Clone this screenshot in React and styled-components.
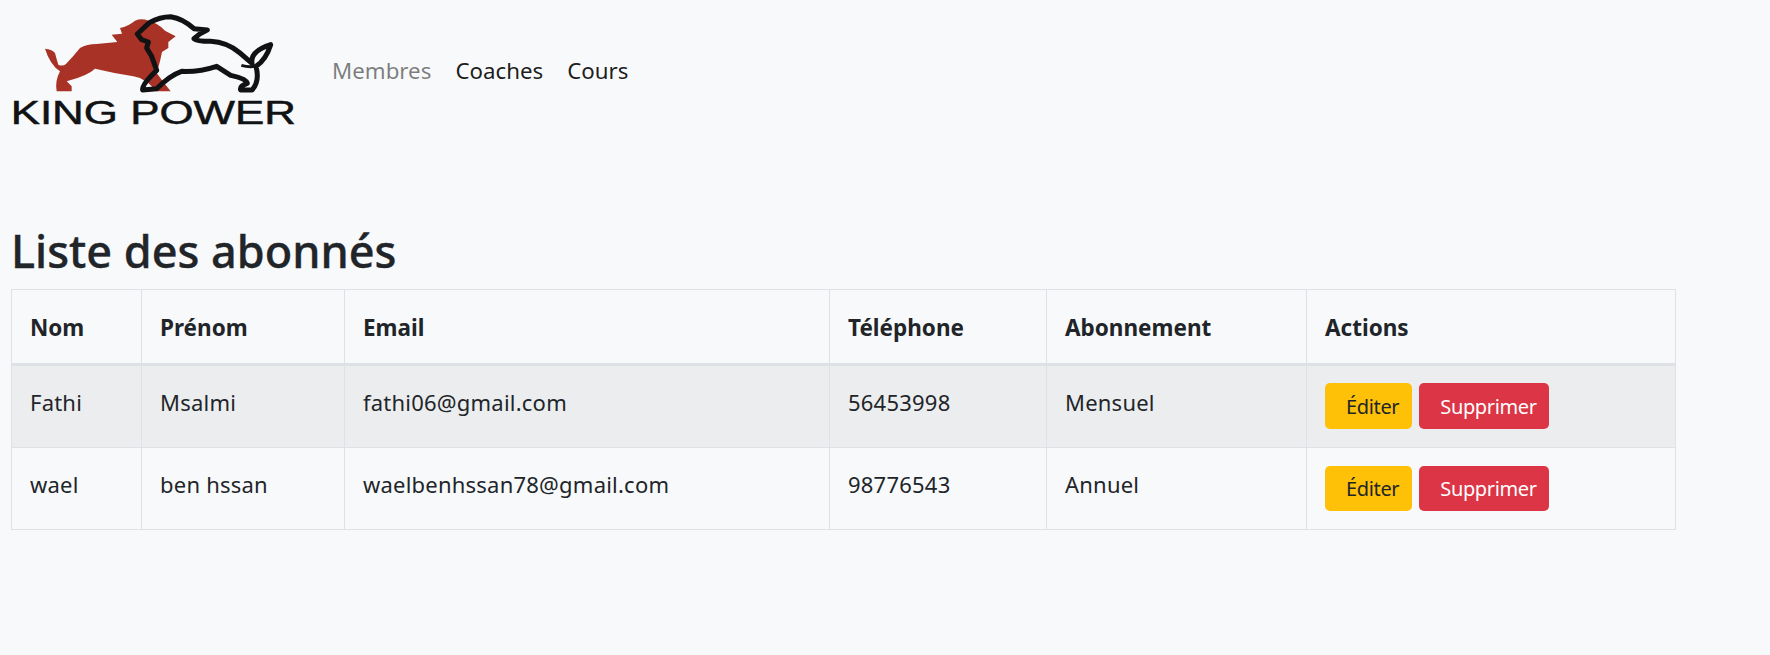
import { createGlobalStyle } from 'styled-components';
import styled from 'styled-components';

const GlobalStyle = createGlobalStyle`
  body {
    margin: 0;
    background: #f8f9fa;
    color: #212529;
    font-family: "Noto Sans", "Open Sans", sans-serif;
    font-size: 22px;
    line-height: 1.5;
  }
`;

const Page = styled.div`
  width: 1770px;
  height: 655px;
  padding: 0 11px;
  box-sizing: border-box;
  overflow: hidden;
`;

const Navbar = styled.nav`
  display: flex;
  align-items: flex-start;
  height: 221px;
`;

const LogoSvg = styled.svg`
  display: block;
  width: 300px;
  height: 140px;
  margin-right: 21px;
  flex: none;
`;

const NavLinks = styled.div`
  display: flex;
  gap: 24px;
  margin-top: 54px;
`;

const NavLink = styled.a`
  color: ${props => (props.$active ? 'rgba(0, 0, 0, 0.5)' : 'rgba(0, 0, 0, 0.9)')};
  font-size: 22.3px;
  text-decoration: none;
`;

const Title = styled.h2`
  margin: 0 0 8px;
  font-size: 45px;
  font-weight: 500;
  line-height: 60px;
  -webkit-text-stroke: 0.4px #212529;
`;

const Table = styled.table`
  width: 1664px;
  table-layout: fixed;
  border-collapse: collapse;
`;

const HeadCell = styled.th`
  width: ${props => props.$width}px;
  box-sizing: border-box;
  height: 75px;
  padding: 2px 18px 0;
  border: 1px solid #dee2e6;
  border-bottom: 3px solid #dee2e6;
  text-align: left;
  font-size: 22.5px;
  font-weight: 700;
`;

const Row = styled.tr`
  background: ${props => (props.$striped ? '#ecedef' : 'transparent')};
`;

const Cell = styled.td`
  box-sizing: border-box;
  height: ${props => props.$height}px;
  padding: 20px 18px 0;
  border: 1px solid #dee2e6;
  vertical-align: top;
  font-size: 22px;
  letter-spacing: 0.22px;
`;

const ActionCell = styled(Cell)`
  padding-top: ${props => props.$top}px;
`;

const Actions = styled.div`
  display: flex;
  gap: 7px;
`;

const Button = styled.button`
  height: ${props => props.$height}px;
  padding: 0 ${props => (props.$danger ? 12 : 13)}px 0 21px;
  border: none;
  border-radius: 5px;
  background: ${props => (props.$danger ? '#dc3545' : '#ffc107')};
  color: ${props => (props.$danger ? '#fff' : '#212529')};
  font-family: inherit;
  font-size: 20px;
  letter-spacing: -0.35px;
`;

const Logo = () => (
  <LogoSvg viewBox="33 0 900 420" aria-label="King Power">
    <g transform="translate(0 4)">
      <path
        fill="#a93226"
        d="M135 142 Q155 143 165 155 Q170 175 175 190 Q188 196 198 188 Q220 165 240 140 Q260 128 290 128 L352 122 L335 100 L366 97 L360 80 Q385 75 405 58 Q425 50 445 58 Q475 65 495 88 L527 105 L505 122 L505 140 L486 152 L480 180 L470 215 L490 242 L512 270 L470 270 L445 245 L420 230 L400 225 Q340 215 285 202 Q265 222 200 240 L215 255 L215 270 L170 270 Q164 240 180 210 Q150 190 135 142 Z"
      />
      <path
        fill="none"
        stroke="#111214"
        strokeWidth="15"
        strokeLinejoin="round"
        d="M412 98 L448 64 Q480 46 512 46 Q550 52 582 82 L622 86 Q600 95 582 112 Q590 120 632 120 Q680 122 720 155 L756 186 Q750 150 812 130 Q798 175 768 195 Q780 240 756 266 L722 266 Q718 254 742 246 Q740 232 692 222 L650 195 Q600 212 545 210 Q510 222 470 262 L428 266 Q425 250 470 207 L455 165 L440 140 L445 122 L425 115 Z"
      />
      <path fill="none" stroke="#111214" strokeWidth="9" d="M724 192 Q745 198 765 195" />
    </g>
    <text
      x="32"
      y="373"
      fill="#111214"
      stroke="#111214"
      strokeWidth="1.5"
      fontFamily="'Liberation Sans', sans-serif"
      fontSize="98"
      textLength="856"
      lengthAdjust="spacingAndGlyphs"
    >
      KING POWER
    </text>
  </LogoSvg>
);

const columns = [
  ['Nom', 130],
  ['Prénom', 203],
  ['Email', 485],
  ['Téléphone', 217],
  ['Abonnement', 260],
  ['Actions', 369],
];

const members = [
  { nom: 'Fathi', prenom: 'Msalmi', email: 'fathi06@gmail.com', tel: '56453998', abo: 'Mensuel', height: 83, btn: 46, top: 17 },
  { nom: 'wael', prenom: 'ben hssan', email: 'waelbenhssan78@gmail.com', tel: '98776543', abo: 'Annuel', height: 82, btn: 45, top: 18 },
];

export default function App() {
  return (
    <Page>
      <GlobalStyle />
      <Navbar>
        <Logo />
        <NavLinks>
          <NavLink $active href="#">Membres</NavLink>
          <NavLink href="#">Coaches</NavLink>
          <NavLink href="#">Cours</NavLink>
        </NavLinks>
      </Navbar>
      <Title>Liste des abonnés</Title>
      <Table>
        <thead>
          <tr>
            {columns.map(([label, width]) => (
              <HeadCell key={label} $width={width}>{label}</HeadCell>
            ))}
          </tr>
        </thead>
        <tbody>
          {members.map((m, i) => (
            <Row key={m.email} $striped={i === 0}>
              <Cell $height={m.height}>{m.nom}</Cell>
              <Cell $height={m.height}>{m.prenom}</Cell>
              <Cell $height={m.height}>{m.email}</Cell>
              <Cell $height={m.height}>{m.tel}</Cell>
              <Cell $height={m.height}>{m.abo}</Cell>
              <ActionCell $height={m.height} $top={m.top}>
                <Actions>
                  <Button $height={m.btn}>Éditer</Button>
                  <Button $height={m.btn} $danger>Supprimer</Button>
                </Actions>
              </ActionCell>
            </Row>
          ))}
        </tbody>
      </Table>
    </Page>
  );
}
